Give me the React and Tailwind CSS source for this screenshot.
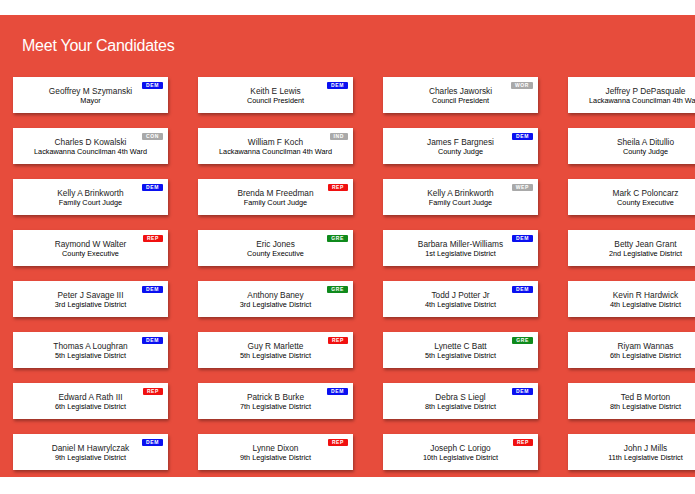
import React from 'react';

const PARTY = {
  DEM: 'bg-[#0a10f0]',
  REP: 'bg-[#f01010]',
  GRE: 'bg-[#0f8a1c]',
  WOR: 'bg-[#a9a9a9]',
  CON: 'bg-[#a9a9a9]',
  IND: 'bg-[#a9a9a9]',
  WEP: 'bg-[#a9a9a9]',
};

const candidates = [
  ['Geoffrey M Szymanski', 'Mayor', 'DEM'],
  ['Keith E Lewis', 'Council President', 'DEM'],
  ['Charles Jaworski', 'Council President', 'WOR'],
  ['Jeffrey P DePasquale', 'Lackawanna Councilman 4th Ward', 'DEM'],
  ['Charles D Kowalski', 'Lackawanna Councilman 4th Ward', 'CON'],
  ['William F Koch', 'Lackawanna Councilman 4th Ward', 'IND'],
  ['James F Bargnesi', 'County Judge', 'DEM'],
  ['Sheila A Ditullio', 'County Judge', 'REP'],
  ['Kelly A Brinkworth', 'Family Court Judge', 'DEM'],
  ['Brenda M Freedman', 'Family Court Judge', 'REP'],
  ['Kelly A Brinkworth', 'Family Court Judge', 'WEP'],
  ['Mark C Poloncarz', 'County Executive', 'DEM'],
  ['Raymond W Walter', 'County Executive', 'REP'],
  ['Eric Jones', 'County Executive', 'GRE'],
  ['Barbara Miller-Williams', '1st Legislative District', 'DEM'],
  ['Betty Jean Grant', '2nd Legislative District', 'DEM'],
  ['Peter J Savage III', '3rd Legislative District', 'DEM'],
  ['Anthony Baney', '3rd Legislative District', 'GRE'],
  ['Todd J Potter Jr', '4th Legislative District', 'DEM'],
  ['Kevin R Hardwick', '4th Legislative District', 'REP'],
  ['Thomas A Loughran', '5th Legislative District', 'DEM'],
  ['Guy R Marlette', '5th Legislative District', 'REP'],
  ['Lynette C Batt', '5th Legislative District', 'GRE'],
  ['Riyam Wannas', '6th Legislative District', 'DEM'],
  ['Edward A Rath III', '6th Legislative District', 'REP'],
  ['Patrick B Burke', '7th Legislative District', 'DEM'],
  ['Debra S Liegl', '8th Legislative District', 'DEM'],
  ['Ted B Morton', '8th Legislative District', 'REP'],
  ['Daniel M Hawrylczak', '9th Legislative District', 'DEM'],
  ['Lynne Dixon', '9th Legislative District', 'REP'],
  ['Joseph C Lorigo', '10th Legislative District', 'REP'],
  ['John J Mills', '11th Legislative District', 'REP'],
];

function CandidateCard({ name, office, party }) {
  return (
    <div className="relative h-[36px] w-[155px] bg-white shadow-[1px_2px_3px_rgba(0,0,0,0.35)] flex flex-col items-center justify-center">
      <span
        className={`absolute top-[5px] right-[5px] px-[4px] rounded-[1px] text-[5px] leading-[7px] font-bold tracking-[0.6px] text-white ${PARTY[party]}`}
      >
        {party}
      </span>
      <p className="text-[8.3px] leading-[10px] text-[#222] whitespace-nowrap">{name}</p>
      <p className="text-[7.3px] leading-[9px] text-[#000] whitespace-nowrap">{office}</p>
    </div>
  );
}

export default function App() {
  return (
    <div className="w-[695px] overflow-hidden bg-white font-['Liberation_Sans',Arial,sans-serif]">
      <div className="h-[15px]" />
      <section className="bg-[#e74c3c] pt-[22px] pb-[7px]">
        <h1 className="pl-[22px] text-[16px] leading-[18px] tracking-[-0.25px] text-white">
          Meet Your Candidates
        </h1>
        <div className="mt-[22px] pl-[13px] grid grid-cols-[repeat(4,155px)] gap-x-[30px] gap-y-[15px] w-max">
          {candidates.map(([name, office, party], i) => (
            <CandidateCard key={i} name={name} office={office} party={party} />
          ))}
        </div>
      </section>
    </div>
  );
}
